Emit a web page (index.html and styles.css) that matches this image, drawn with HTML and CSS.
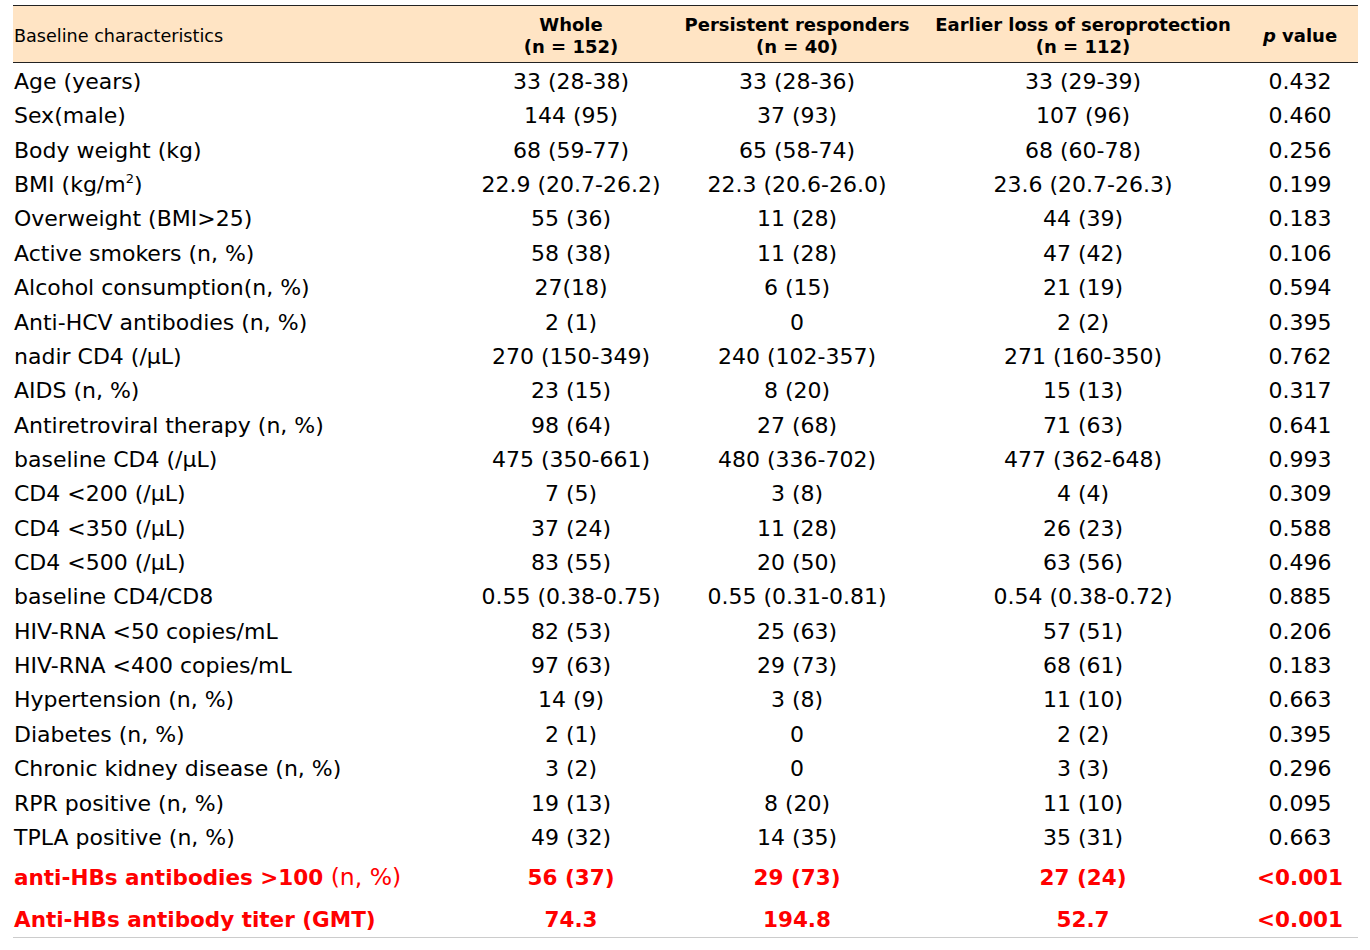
FILE: index.html
```html
<!DOCTYPE html>
<html lang="en">
<head>
<meta charset="utf-8">
<title>Baseline characteristics</title>
<link rel="stylesheet" href="styles.css">
</head>
<body>
<table class="tbl">
  <colgroup>
    <col class="c-label">
    <col class="c-whole">
    <col class="c-pers">
    <col class="c-early">
    <col class="c-p">
  </colgroup>
  <thead>
    <tr class="head">
      <th class="h-label">Baseline characteristics</th>
      <th>Whole<br>(n = 152)</th>
      <th>Persistent responders<br>(n = 40)</th>
      <th>Earlier loss of seroprotection<br>(n = 112)</th>
      <th><i>p</i> value</th>
    </tr>
  </thead>
  <tbody>
    <tr><td>Age (years)</td><td>33 (28-38)</td><td>33 (28-36)</td><td>33 (29-39)</td><td>0.432</td></tr>
    <tr><td>Sex(male)</td><td>144 (95)</td><td>37 (93)</td><td>107 (96)</td><td>0.460</td></tr>
    <tr><td>Body weight (kg)</td><td>68 (59-77)</td><td>65 (58-74)</td><td>68 (60-78)</td><td>0.256</td></tr>
    <tr><td>BMI (kg/m<sup>2</sup>)</td><td>22.9 (20.7-26.2)</td><td>22.3 (20.6-26.0)</td><td>23.6 (20.7-26.3)</td><td>0.199</td></tr>
    <tr><td>Overweight (BMI&gt;25)</td><td>55 (36)</td><td>11 (28)</td><td>44 (39)</td><td>0.183</td></tr>
    <tr><td>Active smokers (n, %)</td><td>58 (38)</td><td>11 (28)</td><td>47 (42)</td><td>0.106</td></tr>
    <tr><td>Alcohol consumption(n, %)</td><td>27(18)</td><td>6 (15)</td><td>21 (19)</td><td>0.594</td></tr>
    <tr><td>Anti-HCV antibodies (n, %)</td><td>2 (1)</td><td>0</td><td>2 (2)</td><td>0.395</td></tr>
    <tr><td>nadir CD4 (/μL)</td><td>270 (150-349)</td><td>240 (102-357)</td><td>271 (160-350)</td><td>0.762</td></tr>
    <tr><td>AIDS (n, %)</td><td>23 (15)</td><td>8 (20)</td><td>15 (13)</td><td>0.317</td></tr>
    <tr><td>Antiretroviral therapy (n, %)</td><td>98 (64)</td><td>27 (68)</td><td>71 (63)</td><td>0.641</td></tr>
    <tr><td>baseline CD4 (/μL)</td><td>475 (350-661)</td><td>480 (336-702)</td><td>477 (362-648)</td><td>0.993</td></tr>
    <tr><td>CD4 &lt;200 (/μL)</td><td>7 (5)</td><td>3 (8)</td><td>4 (4)</td><td>0.309</td></tr>
    <tr><td>CD4 &lt;350 (/μL)</td><td>37 (24)</td><td>11 (28)</td><td>26 (23)</td><td>0.588</td></tr>
    <tr><td>CD4 &lt;500 (/μL)</td><td>83 (55)</td><td>20 (50)</td><td>63 (56)</td><td>0.496</td></tr>
    <tr><td>baseline CD4/CD8</td><td>0.55 (0.38-0.75)</td><td>0.55 (0.31-0.81)</td><td>0.54 (0.38-0.72)</td><td>0.885</td></tr>
    <tr><td>HIV-RNA &lt;50 copies/mL</td><td>82 (53)</td><td>25 (63)</td><td>57 (51)</td><td>0.206</td></tr>
    <tr><td>HIV-RNA &lt;400 copies/mL</td><td>97 (63)</td><td>29 (73)</td><td>68 (61)</td><td>0.183</td></tr>
    <tr><td>Hypertension (n, %)</td><td>14 (9)</td><td>3 (8)</td><td>11 (10)</td><td>0.663</td></tr>
    <tr><td>Diabetes (n, %)</td><td>2 (1)</td><td>0</td><td>2 (2)</td><td>0.395</td></tr>
    <tr><td>Chronic kidney disease (n, %)</td><td>3 (2)</td><td>0</td><td>3 (3)</td><td>0.296</td></tr>
    <tr><td>RPR positive (n, %)</td><td>19 (13)</td><td>8 (20)</td><td>11 (10)</td><td>0.095</td></tr>
    <tr><td>TPLA positive (n, %)</td><td>49 (32)</td><td>14 (35)</td><td>35 (31)</td><td>0.663</td></tr>
    <tr class="hl"><td>anti-HBs antibodies &gt;100 <span class="reg">(n, %)</span></td><td>56 (37)</td><td>29 (73)</td><td>27 (24)</td><td>&lt;0.001</td></tr>
    <tr class="hl last"><td>Anti-HBs antibody titer (GMT)</td><td>74.3</td><td>194.8</td><td>52.7</td><td>&lt;0.001</td></tr>
  </tbody>
</table>
</body>
</html>
```

FILE: styles.css
```css
html, body {
  margin: 0;
  padding: 0;
  background: #ffffff;
}

body {
  font-family: "DejaVu Sans", Verdana, sans-serif;
  color: #000000;
}

.tbl {
  margin: 5px 0 0 13px;
  border-collapse: collapse;
  table-layout: fixed;
  width: 1345px;
}

.c-label { width: 459px; }
.c-whole { width: 198px; }
.c-pers  { width: 254px; }
.c-early { width: 318px; }
.c-p     { width: 116px; }

.head {
  background: #ffe4c4;
  border-top: 1px solid #222222;
  border-bottom: 1px solid #222222;
}

.head th {
  padding: 8px 0 4px;
  font-size: 18px;
  line-height: 22px;
  font-weight: bold;
  text-align: center;
  vertical-align: middle;
}

.head th.h-label {
  text-align: left;
  font-weight: normal;
  font-size: 17.6px;
  padding-left: 1px;
}

.head th i {
  font-style: italic;
}

tbody td {
  padding: 4px 0 0;
  font-size: 22px;
  line-height: 30.36px;
  text-align: center;
  white-space: nowrap;
}

tbody td:first-child {
  text-align: left;
  padding-left: 1px;
}

tbody sup {
  font-size: 13px;
  line-height: 0;
  vertical-align: 9px;
}

.hl td {
  color: #ff0000;
  font-weight: bold;
  font-size: 21.5px;
  padding-top: 8px;
  line-height: 34px;
}

.hl .reg {
  font-weight: normal;
  font-size: 23.5px;
  line-height: 20px;
}

.last {
  border-bottom: 1px solid #cccccc;
}
```
